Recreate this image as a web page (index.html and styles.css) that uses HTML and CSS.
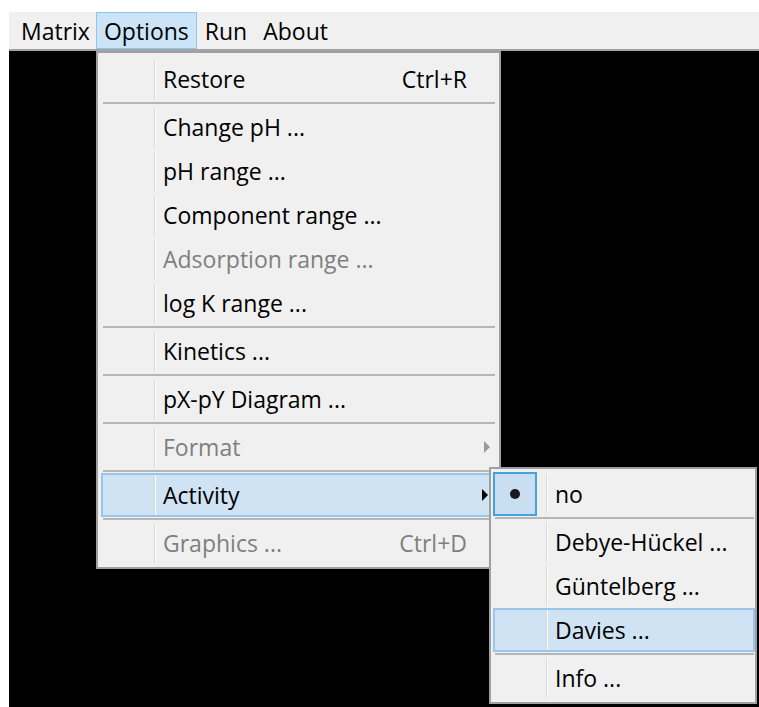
FILE: index.html
```html
<!DOCTYPE html>
<html lang="en">
<head>
<meta charset="utf-8">
<title>Matrix</title>
<link rel="stylesheet" href="styles.css">
</head>
<body>
<div class="window">
  <nav class="menubar">
    <span class="bar-item">Matrix</span>
    <span class="bar-item open">Options</span>
    <span class="bar-item">Run</span>
    <span class="bar-item">About</span>
  </nav>
  <div class="canvas"></div>

  <!-- Options drop-down -->
  <div class="menu options-menu">
    <div class="item"><span class="gutter"></span><span class="label">Restore</span><span class="key">Ctrl+R</span></div>
    <div class="sep"></div>
    <div class="item"><span class="gutter"></span><span class="label">Change pH ...</span></div>
    <div class="item"><span class="gutter"></span><span class="label">pH range ...</span></div>
    <div class="item"><span class="gutter"></span><span class="label">Component range ...</span></div>
    <div class="item disabled"><span class="gutter"></span><span class="label">Adsorption range ...</span></div>
    <div class="item"><span class="gutter"></span><span class="label">log K range ...</span></div>
    <div class="sep"></div>
    <div class="item"><span class="gutter"></span><span class="label">Kinetics ...</span></div>
    <div class="sep"></div>
    <div class="item"><span class="gutter"></span><span class="label">pX-pY Diagram ...</span></div>
    <div class="sep"></div>
    <div class="item disabled"><span class="gutter"></span><span class="label">Format</span><span class="arrow"></span></div>
    <div class="sep"></div>
    <div class="item hot"><span class="gutter"></span><span class="label">Activity</span><span class="arrow"></span></div>
    <div class="sep"></div>
    <div class="item disabled"><span class="gutter"></span><span class="label">Graphics ...</span><span class="key">Ctrl+D</span></div>
  </div>

  <!-- Activity submenu -->
  <div class="menu activity-menu">
    <div class="item"><span class="gutter"><span class="check"><span class="dot"></span></span></span><span class="label">no</span></div>
    <div class="sep"></div>
    <div class="item"><span class="gutter"></span><span class="label">Debye-Hückel ...</span></div>
    <div class="item"><span class="gutter"></span><span class="label">Güntelberg ...</span></div>
    <div class="item hot"><span class="gutter"></span><span class="label">Davies ...</span></div>
    <div class="sep"></div>
    <div class="item"><span class="gutter"></span><span class="label">Info ...</span></div>
  </div>
</div>
</body>
</html>
```
FILE: styles.css
```css
html, body {
  margin: 0;
  padding: 0;
  background: #ffffff;
}

body {
  font-family: "Open Sans", "Noto Sans", "Liberation Sans", sans-serif;
  font-size: 23px;
  color: #000000;
}

.window {
  position: relative;
  width: 759px;
  height: 707px;
  box-sizing: border-box;
  padding: 12px 0 0 9px;
  display: flex;
  flex-direction: column;
  overflow: hidden;
}

/* ---- menu bar ---- */
.menubar {
  display: flex;
  align-items: stretch;
  height: 37px;
  padding-left: 4px;
  background: #f0f0f0;
  border-bottom: 2px solid #a3a3a3;
}

.bar-item {
  display: flex;
  align-items: center;
  padding: 1px 7px 0;
  border: 1px solid transparent;
  line-height: 1;
}

.bar-item:first-child {
  padding-right: 5px;
}

.bar-item.open {
  background: #cce4f7;
  border-color: #90c3ee;
}

.canvas {
  flex: 1;
  background: #000000;
}

/* ---- popup menus ---- */
.menu {
  position: absolute;
  box-sizing: border-box;
  background: #f0f0f0;
  border: 2px solid #a0a0a0;
  display: flex;
  flex-direction: column;
}

.options-menu {
  left: 96px;
  top: 51px;
  width: 405px;
  padding: 4px 0 2px;
}

.activity-menu {
  left: 489px;
  top: 467px;
  width: 268px;
  padding: 3px 0 2px;
}

.item {
  display: flex;
  align-items: center;
  height: 44px;
  box-sizing: border-box;
  margin: 0 5px 0 3px;
  border: 2px solid transparent;
  border-left: 0;
  border-right: 0;
  white-space: nowrap;
}

.activity-menu .item {
  margin: 0 0 0 2px;
}

.gutter {
  align-self: stretch;
  width: 54px;
  flex: none;
  box-sizing: border-box;
  border-right: 1px solid #dadada;
  box-shadow: 1px 0 0 #fbfbfb;
  display: flex;
  align-items: center;
}

.label {
  padding-left: 8px;
}

.key {
  margin-left: auto;
  padding-right: 27px;
}

.arrow {
  margin-left: auto;
  margin-right: 4px;
  width: 0;
  height: 0;
  border-top: 6px solid transparent;
  border-bottom: 6px solid transparent;
  border-left: 6px solid #000000;
}

.item.disabled {
  color: #7f7f7f;
}

.item.disabled .arrow {
  border-left-color: #9a9a9a;
}

.item.hot {
  background: #d0e3f4;
  border: 2px solid #9ac6ee;
}

.item.hot .gutter {
  margin-left: -2px;
  width: 54px;
}

.sep {
  height: 4px;
  display: flex;
  align-items: center;
  margin: 0 4px 0 5px;
}

.sep::before {
  content: "";
  flex: 1;
  height: 2px;
  background: #b6b6b6;
}

.activity-menu .sep {
  margin: 0 1px 0 4px;
}

/* checked radio mark in the submenu */
.check {
  width: 44px;
  height: 44px;
  box-sizing: border-box;
  margin-top: -2px;
  margin-bottom: -2px;
  background: #c9def0;
  border: 2px solid #44a2df;
  display: flex;
  align-items: center;
  justify-content: center;
}

.dot {
  width: 10px;
  height: 10px;
  border-radius: 50%;
  background: #1a1a1a;
}
```
